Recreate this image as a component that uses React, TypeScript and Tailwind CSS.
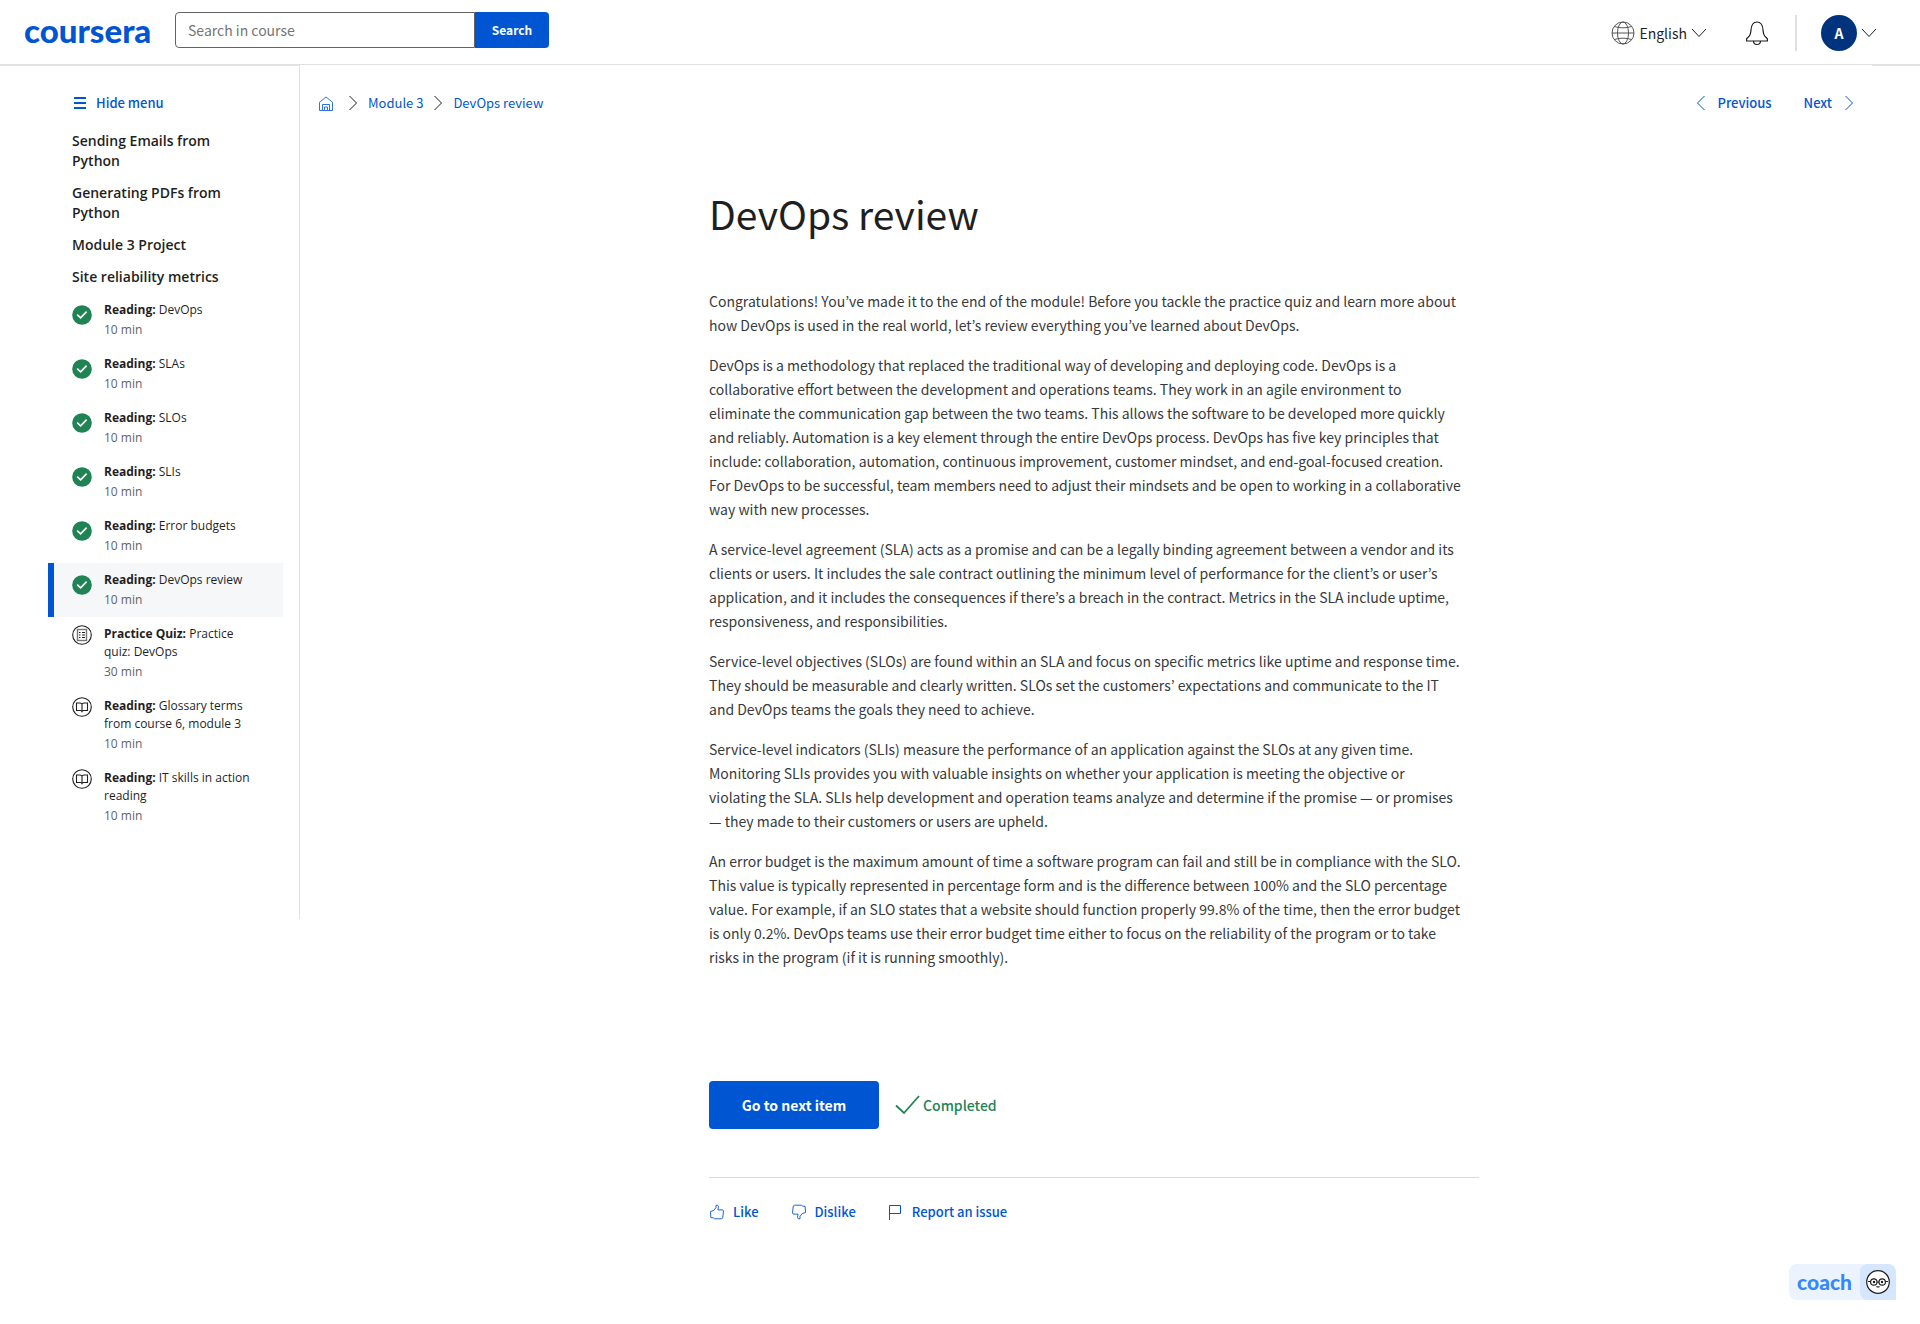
import React, { Fragment } from 'react';

const sans = "font-['Noto_Sans_CJK_KR',sans-serif]";

const headings = ['Sending Emails from Python', 'Generating PDFs from Python', 'Module 3 Project', 'Site reliability metrics'];

type Item = { kind: string; title: string; time: string; icon: 'done' | 'quiz' | 'book'; active?: boolean };

const items: Item[] = [
  { kind: 'Reading:', title: 'DevOps', time: '10 min', icon: 'done' },
  { kind: 'Reading:', title: 'SLAs', time: '10 min', icon: 'done' },
  { kind: 'Reading:', title: 'SLOs', time: '10 min', icon: 'done' },
  { kind: 'Reading:', title: 'SLIs', time: '10 min', icon: 'done' },
  { kind: 'Reading:', title: 'Error budgets', time: '10 min', icon: 'done' },
  { kind: 'Reading:', title: 'DevOps review', time: '10 min', icon: 'done', active: true },
  { kind: 'Practice Quiz:', title: 'Practice quiz: DevOps', time: '30 min', icon: 'quiz' },
  { kind: 'Reading:', title: 'Glossary terms from course 6, module 3', time: '10 min', icon: 'book' },
  { kind: 'Reading:', title: 'IT skills in action reading', time: '10 min', icon: 'book' },
];

const paragraphs: string[][] = [
  [
    'Congratulations! You’ve made it to the end of the module! Before you tackle the practice quiz and learn more about',
    'how DevOps is used in the real world, let’s review everything you’ve learned about DevOps.',
  ],
  [
    'DevOps is a methodology that replaced the traditional way of developing and deploying code. DevOps is a',
    'collaborative effort between the development and operations teams. They work in an agile environment to',
    'eliminate the communication gap between the two teams. This allows the software to be developed more quickly',
    'and reliably. Automation is a key element through the entire DevOps process. DevOps has five key principles that',
    'include: collaboration, automation, continuous improvement, customer mindset, and end-goal-focused creation.',
    'For DevOps to be successful, team members need to adjust their mindsets and be open to working in a collaborative',
    'way with new processes.',
  ],
  [
    'A service-level agreement (SLA) acts as a promise and can be a legally binding agreement between a vendor and its',
    'clients or users. It includes the sale contract outlining the minimum level of performance for the client’s or user’s',
    'application, and it includes the consequences if there’s a breach in the contract. Metrics in the SLA include uptime,',
    'responsiveness, and responsibilities.',
  ],
  [
    'Service-level objectives (SLOs) are found within an SLA and focus on specific metrics like uptime and response time.',
    'They should be measurable and clearly written. SLOs set the customers’ expectations and communicate to the IT',
    'and DevOps teams the goals they need to achieve.',
  ],
  [
    'Service-level indicators (SLIs) measure the performance of an application against the SLOs at any given time.',
    'Monitoring SLIs provides you with valuable insights on whether your application is meeting the objective or',
    'violating the SLA. SLIs help development and operation teams analyze and determine if the promise — or promises',
    '— they made to their customers or users are upheld.',
  ],
  [
    'An error budget is the maximum amount of time a software program can fail and still be in compliance with the SLO.',
    'This value is typically represented in percentage form and is the difference between 100% and the SLO percentage',
    'value. For example, if an SLO states that a website should function properly 99.8% of the time, then the error budget',
    'is only 0.2%. DevOps teams use their error budget time either to focus on the reliability of the program or to take',
    'risks in the program (if it is running smoothly).',
  ],
];

function Chevron({ dir, className }: { dir: 'left' | 'right' | 'down'; className?: string }) {
  if (dir === 'down') {
    return (
      <svg width="16" height="10" viewBox="0 0 16 10" fill="none" stroke="currentColor" strokeWidth="1" className={className}>
        <path d="M1 1 8 8.5 15 1" />
      </svg>
    );
  }
  return (
    <svg width="10" height="16" viewBox="0 0 10 16" fill="none" stroke="currentColor" strokeWidth="1" className={className}>
      <path d={dir === 'right' ? 'M1.5 1 8.5 8 1.5 15' : 'M8.5 1 1.5 8 8.5 15'} />
    </svg>
  );
}

function StatusIcon({ icon }: { icon: Item['icon'] }) {
  if (icon === 'done') {
    return (
      <svg width="20" height="20" viewBox="0 0 20 20" className="mt-1 shrink-0">
        <circle cx="10" cy="10" r="9.8" fill="#1f8354" />
        <path d="M5.2 9.6 8.6 12.8 14.6 6.6" fill="none" stroke="#fff" strokeWidth="1.6" />
      </svg>
    );
  }
  return (
    <svg width="20" height="20" viewBox="0 0 20 20" fill="none" stroke="#1f1f1f" className="shrink-0">
      <circle cx="10" cy="10" r="9.3" strokeWidth="1.1" />
      {icon === 'quiz' ? (
        <>
          <rect x="5.5" y="4.5" width="9" height="11" stroke="#777" strokeWidth="1.4" />
          <path d="M7 7.5h1.5M10 7.5h3M7 10h1.5M10 10h3M7 12.5h1.5M10 12.5h3" strokeWidth="1" />
        </>
      ) : (
        <path d="M10 7C9.4 6.3 8.6 6 7.600 6H4.500v7.500h4c.8 0 1.200.3 1.500 1 .3-.7.700-1 1.500-1h4V6h-3.100c-1 0-1.800.3-2.400 1v7.500" strokeWidth="1.100" />
      )}
    </svg>
  );
}

function Thumb({ down }: { down?: boolean }) {
  return (
    <svg width="16" height="16" viewBox="0 0 16 16" fill="none" stroke="#0056d2" strokeWidth="0.9" className={down ? 'rotate-180' : ''}>
      <path d="M1.500 7.500 4.800 6.400 7 3.600V1.200h1.600l.9 1.500-.6 3.200h4.900l.7 1.200-.8 7-1.300.7H5.600l-1.200-.9-2.600-.4z" />
    </svg>
  );
}

export default function App() {
  return (
    <div className={`${sans} bg-white text-[#1f1f1f]`}>
      <header className="flex h-[66px] items-start justify-between border-b-2 border-[#e1e1e1]">
        <div className="flex items-start">
          <a href="#" aria-label="Coursera" className="ml-6 mt-3 w-[151px] font-['Lato',sans-serif] text-[33px] font-black leading-9 text-[#0056d2]">coursera</a>
          <form className="mt-3 flex h-9" onSubmit={(e) => e.preventDefault()}>
            <input aria-label="Search in course" placeholder="Search in course" className="w-[300px] rounded-l border border-[#636363] px-3 text-sm placeholder:text-[#757575]" />
            <button className="w-[74px] rounded-r bg-[#0056d2] text-xs font-bold text-white">Search</button>
          </form>
        </div>
        <div className="mr-[43px] mt-[15px] flex h-9 items-center">
          <button className="flex items-center text-sm">
            <svg width="24" height="24" viewBox="0 0 24 24" fill="none" stroke="#555" strokeWidth="1" className="mr-1">
              <circle cx="12" cy="12" r="11" />
              <ellipse cx="12" cy="12" rx="5.5" ry="11" />
              <path d="M1 12h22M3.500 5.500c5 1.800 12 1.800 17 0M3.500 18.500c5-1.800 12-1.800 17 0" />
            </svg>
            English
            <Chevron dir="down" className="ml-1" />
          </button>
          <button aria-label="Notifications" className="ml-[38px]">
            <svg width="24" height="26" viewBox="0 0 24 26" fill="none" stroke="#1f1f1f" strokeWidth="1.200">
              <path d="M1.600 21v-2.200l2.600-2.600c1.600-2 1.600-4 1.800-6.200C6.300 5.500 8 2 12 2s5.700 3.500 6 8c.2 2.200.2 4.200 1.800 6.200l2.600 2.600V21zM8.500 21c0 2 1.500 3.500 3.500 3.500s3.500-1.500 3.500-3.500" />
            </svg>
          </button>
          <div className="ml-[26px] h-9 w-0.5 bg-[#e1e1e1]" />
          <button className="ml-6 flex items-center gap-1">
            <span className="flex size-9 items-center justify-center rounded-full bg-[#00337d] text-sm font-bold text-white">A</span>
            <Chevron dir="down" />
          </button>
        </div>
      </header>

      <div className="flex items-start">
        <aside className="h-[853px] w-[300px] shrink-0 border-r border-[#e1e1e1] pl-12 font-['Open_Sans',sans-serif]">
          <button className={`${sans} ml-[26px] mt-[27px] flex h-5 items-center gap-2.5 text-[13px] font-medium text-[#0056d2]`}>
            <svg width="12" height="12" viewBox="0 0 12 12" fill="#0056d2">
              <path d="M0 0h12v2H0zM0 5h12v2H0zM0 10h12v2H0z" />
            </svg>
            Hide menu
          </button>
          <div className="ml-6 mt-3">
            {headings.map((h) => (
              <h2 key={h} className="w-44 py-1.5 text-sm font-semibold leading-5">{h}</h2>
            ))}
          </div>
          <ul className="mr-4">
            {items.map((it) => (
              <li key={it.title}>
                <a href="#" className={`flex gap-3 border-l-6 py-2 pl-[18px] pr-6 text-xs ${it.active ? 'border-[#0056d2] bg-[#f5f7f8]' : 'border-transparent'}`}>
                  <StatusIcon icon={it.icon} />
                  <span className="leading-[18px]">
                    <span className="block"><b className="font-bold">{it.kind}</b> {it.title}</span>
                    <span className="mt-0.5 block text-[#636363]">{it.time}</span>
                  </span>
                </a>
              </li>
            ))}
          </ul>
        </aside>

        <main className="relative -mt-px mr-12 min-w-0 flex-1 bg-white pl-[19px] pr-[3px]">
          <div className="flex items-center justify-between pt-7 text-[13px] text-[#0056d2]">
            <nav aria-label="Breadcrumb" className="flex h-5 items-center">
              <a href="#" aria-label="Home">
                <svg width="14" height="15" viewBox="0 0 14 15" fill="none" stroke="#2f74dc" strokeWidth="1">
                  <path d="M.5 6.200 7 1l6.500 5.200v8.300H.5zM3.500 14.500V8.500h7v6M5.500 14v-3h3v3" />
                </svg>
              </a>
              <Chevron dir="right" className="ml-[15px] text-[#1f1f1f]" />
              <a href="#" className="ml-2.5">Module 3</a>
              <Chevron dir="right" className="ml-2.5 text-[#1f1f1f]" />
              <a href="#" className="ml-2.5">DevOps review</a>
            </nav>
            <div className="mr-[15px] flex h-5 items-center gap-8 font-medium">
              <a href="#" className="flex items-center gap-3"><Chevron dir="left" />Previous</a>
              <a href="#" className="flex items-center gap-3">Next<Chevron dir="right" /></a>
            </div>
          </div>

          <article className="mx-auto w-[770px] pt-[72px]">
            <h1 className="text-[39px] leading-[56px]">DevOps review</h1>
            <div className="mt-12 space-y-4 text-sm leading-6 text-[#373a3c]">
              {paragraphs.map((lines) => (
                <p key={lines[0]}>
                  {lines.map((line, i) => (
                    <Fragment key={line}>
                      {i > 0 && <br />}
                      {line}
                    </Fragment>
                  ))}
                </p>
              ))}
            </div>
            <div className="mt-28 flex h-12 items-center">
              <button className="h-12 w-[170px] rounded-sm bg-[#0056d2] text-sm font-bold text-white">Go to next item</button>
              <svg width="26" height="20" viewBox="0 0 26 20" fill="none" stroke="#1f8354" strokeWidth="1.800" className="ml-4">
                <path d="M1 10.500 9 18 24 1" />
              </svg>
              <span className="ml-0.5 text-sm font-medium text-[#1f8354]">Completed</span>
            </div>
            <div className="mt-12 flex gap-8 border-t border-[#dadada] pt-6 text-[13px] font-medium text-[#0056d2]">
              <button className="flex items-center gap-2"><Thumb />Like</button>
              <button className="flex items-center gap-2"><Thumb down />Dislike</button>
              <button className="flex items-center gap-2.5">
                <svg width="14" height="16" viewBox="0 0 14 16" fill="none" stroke="#0056d2">
                  <path d="M1.500 16V1.500h11v8h-11" />
                </svg>
                Report an issue
              </button>
            </div>
          </article>
        </main>
      </div>

      <button className="fixed bottom-6 right-6 flex h-9 items-center rounded-lg bg-[#ebf3ff]">
        <span className="w-[71px] font-['Lato',sans-serif] text-[21px] font-black text-[#3587fc]">coach</span>
        <span className="flex size-9 items-center justify-center rounded-lg rounded-br-none bg-[#d6e6ff]">
          <svg width="24" height="24" viewBox="0 0 24 24" fill="none" stroke="#1f1f1f" strokeWidth="1.200">
            <circle cx="12" cy="12" r="11.300" fill="#fff" />
            <circle cx="7.800" cy="12" r="3.200" />
            <circle cx="16.200" cy="12" r="3.200" />
            <path d="M11 12h2M2 11.500h2.600M19.400 11.500H22M10.500 16.500q1.500 1 3 0" />
            <circle cx="8" cy="12" r=".6" fill="#1f1f1f" />
            <circle cx="16" cy="12" r=".6" fill="#1f1f1f" />
          </svg>
        </span>
      </button>
    </div>
  );
}
